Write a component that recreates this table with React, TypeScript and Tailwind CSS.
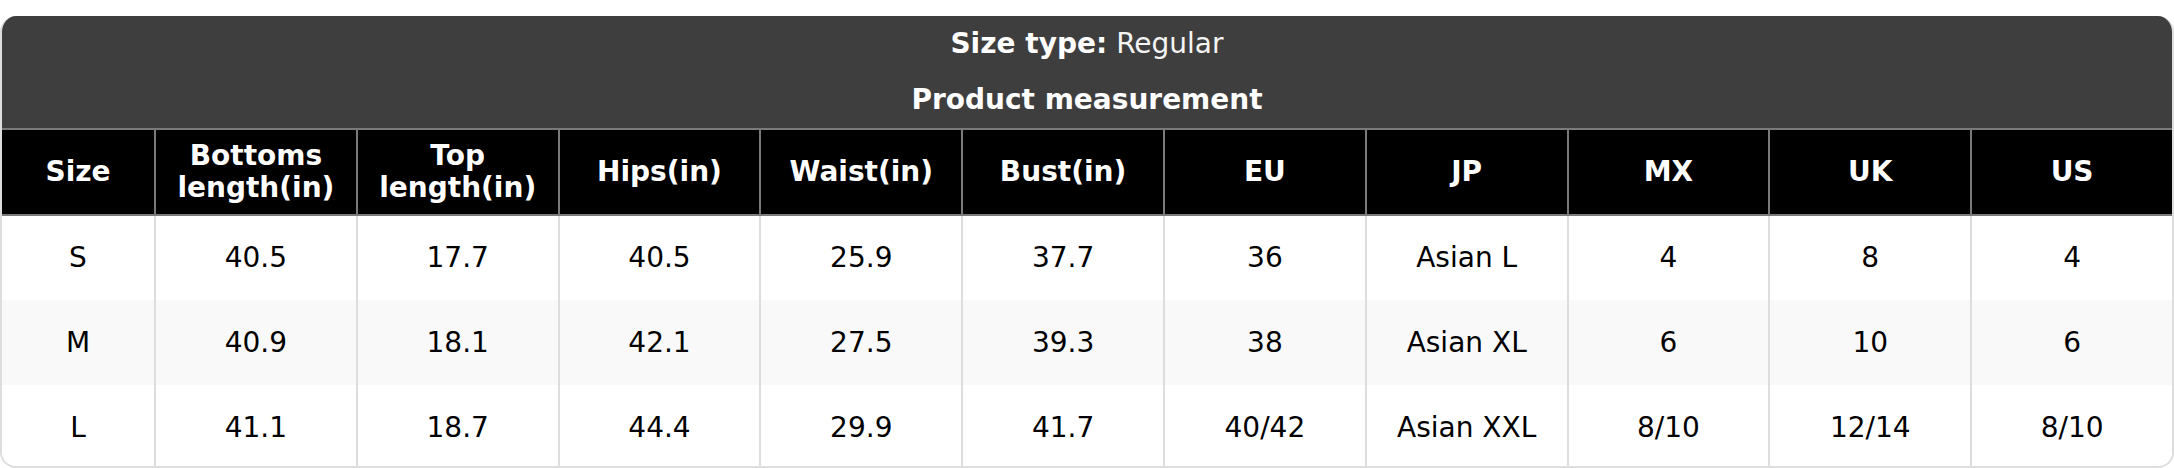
const HEADERS = [
  ['Size'],
  ['Bottoms', 'length(in)'],
  ['Top', 'length(in)'],
  ['Hips(in)'],
  ['Waist(in)'],
  ['Bust(in)'],
  ['EU'],
  ['JP'],
  ['MX'],
  ['UK'],
  ['US'],
];

const ROWS = [
  ['S', '40.5', '17.7', '40.5', '25.9', '37.7', '36', 'Asian L', '4', '8', '4'],
  ['M', '40.9', '18.1', '42.1', '27.5', '39.3', '38', 'Asian XL', '6', '10', '6'],
  ['L', '41.1', '18.7', '44.4', '29.9', '41.7', '40/42', 'Asian XXL', '8/10', '12/14', '8/10'],
];

export default function App() {
  return (
    <div className="bg-white pt-[16px] font-['DejaVu_Sans',sans-serif]">
      <div className="w-[2174px] h-[452px] overflow-hidden rounded-[16px] border-2 border-t-0 border-[#dddddd] bg-white">
        {/* Title block */}
        <div className="bg-[#3e3e3e] text-white text-center h-[112px] flex flex-col">
          <div className="h-[56px] flex items-center justify-center text-[28px]">
            <span className="font-bold">Size type:</span>
            <span className="ml-[9px] font-normal text-[#f4f4f4]">Regular</span>
          </div>
          <div className="h-[56px] flex items-center justify-center text-[28px] font-bold pb-[1px]">
            Product measurement
          </div>
        </div>

        <table className="table-fixed border-collapse -ml-[2px] w-[2174px]">
          <colgroup>
            <col className="w-[154px]" />
            {HEADERS.slice(1).map((_, i) => (
              <col key={i} />
            ))}
          </colgroup>
          <thead>
            <tr className="bg-black text-white h-[86px]">
              {HEADERS.map((lines, i) => (
                <th
                  key={i}
                  className="border-2 border-[#7a7a7a] text-[28px] font-bold leading-[32px] text-center align-middle p-0"
                >
                  {lines.map((l, j) => (
                    <div key={j}>{l}</div>
                  ))}
                </th>
              ))}
            </tr>
          </thead>
          <tbody>
            {ROWS.map((row, r) => (
              <tr key={r} className={r === 1 ? 'bg-[#f9f9f9] h-[85px]' : 'bg-white h-[85px]'}>
                {row.map((cell, c) => (
                  <td
                    key={c}
                    className="border-x-2 border-[#dddddd] text-[28px] text-black text-center align-middle p-0"
                  >
                    {cell}
                  </td>
                ))}
              </tr>
            ))}
          </tbody>
        </table>
      </div>
    </div>
  );
}
